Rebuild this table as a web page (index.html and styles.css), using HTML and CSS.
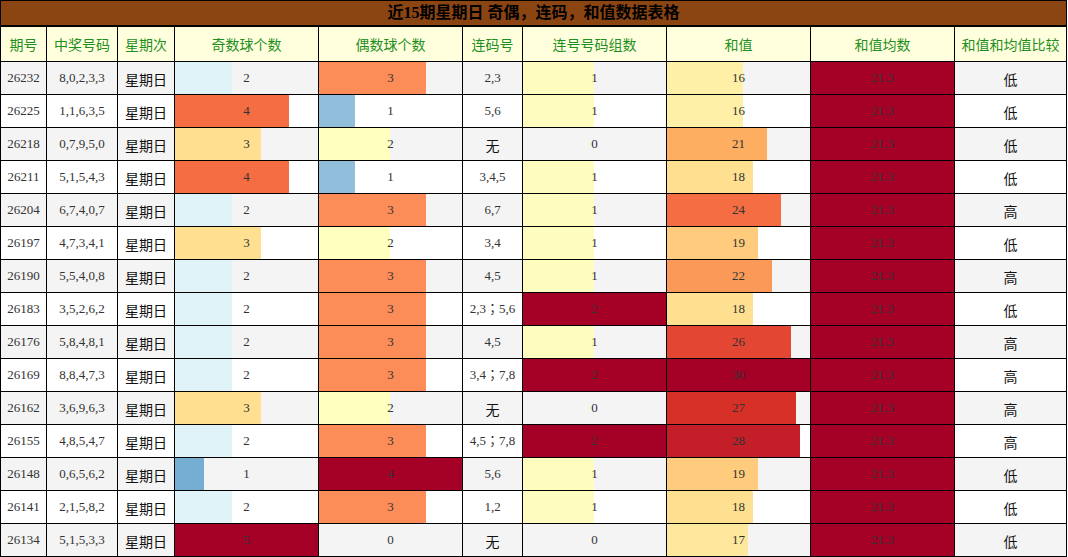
FILE: index.html
```html
<!DOCTYPE html>
<html lang="zh">
<head>
<meta charset="utf-8">
<title>近15期星期日 奇偶，连码，和值数据表格</title>
<link rel="stylesheet" href="styles.css">
</head>
<body>
<table class="data">
  <colgroup>
    <col class="c-qh"><col class="c-hm"><col class="c-xq"><col class="c-bar"><col class="c-bar"><col class="c-lm"><col class="c-bar"><col class="c-bar"><col class="c-bar"><col class="c-cmp">
  </colgroup>
  <thead>
    <tr class="title-row"><th colspan="10">近15期星期日 奇偶，连码，和值数据表格</th></tr>
    <tr class="head-row">
      <th>期号</th><th>中奖号码</th><th>星期次</th><th>奇数球个数</th><th>偶数球个数</th><th>连码号</th><th>连号号码组数</th><th>和值</th><th>和值均数</th><th>和值和均值比较</th>
    </tr>
  </thead>
  <tbody>
    <tr><td class="num">26232</td><td class="num">8,0,2,3,3</td><td class="cjk">星期日</td><td class="bar" style="--w:40%;--c:#e0f3f8">2</td><td class="bar" style="--w:75%;--c:#fc8d59">3</td><td class="num">2,3</td><td class="bar" style="--w:50%;--c:#fffcbf">1</td><td class="bar" style="--w:53.33%;--c:#fff0a8">16</td><td class="bar" style="--w:100%;--c:#a50026">21.3</td><td class="cjk">低</td></tr>
    <tr><td class="num">26225</td><td class="num">1,1,6,3,5</td><td class="cjk">星期日</td><td class="bar" style="--w:80%;--c:#f46d43">4</td><td class="bar" style="--w:25%;--c:#91bfdb">1</td><td class="num">5,6</td><td class="bar" style="--w:50%;--c:#fffcbf">1</td><td class="bar" style="--w:53.33%;--c:#fff0a8">16</td><td class="bar" style="--w:100%;--c:#a50026">21.3</td><td class="cjk">低</td></tr>
    <tr><td class="num">26218</td><td class="num">0,7,9,5,0</td><td class="cjk">星期日</td><td class="bar" style="--w:60%;--c:#fee090">3</td><td class="bar" style="--w:50%;--c:#ffffbf">2</td><td class="cjk">无</td><td class="bar" style="--w:0%;--c:#fffcbf">0</td><td class="bar" style="--w:70%;--c:#fdae61">21</td><td class="bar" style="--w:100%;--c:#a50026">21.3</td><td class="cjk">低</td></tr>
    <tr><td class="num">26211</td><td class="num">5,1,5,4,3</td><td class="cjk">星期日</td><td class="bar" style="--w:80%;--c:#f46d43">4</td><td class="bar" style="--w:25%;--c:#91bfdb">1</td><td class="num">3,4,5</td><td class="bar" style="--w:50%;--c:#fffcbf">1</td><td class="bar" style="--w:60%;--c:#fee090">18</td><td class="bar" style="--w:100%;--c:#a50026">21.3</td><td class="cjk">低</td></tr>
    <tr><td class="num">26204</td><td class="num">6,7,4,0,7</td><td class="cjk">星期日</td><td class="bar" style="--w:40%;--c:#e0f3f8">2</td><td class="bar" style="--w:75%;--c:#fc8d59">3</td><td class="num">6,7</td><td class="bar" style="--w:50%;--c:#fffcbf">1</td><td class="bar" style="--w:80%;--c:#f46d43">24</td><td class="bar" style="--w:100%;--c:#a50026">21.3</td><td class="cjk">高</td></tr>
    <tr><td class="num">26197</td><td class="num">4,7,3,4,1</td><td class="cjk">星期日</td><td class="bar" style="--w:60%;--c:#fee090">3</td><td class="bar" style="--w:50%;--c:#ffffbf">2</td><td class="num">3,4</td><td class="bar" style="--w:50%;--c:#fffcbf">1</td><td class="bar" style="--w:63.33%;--c:#fecc7c">19</td><td class="bar" style="--w:100%;--c:#a50026">21.3</td><td class="cjk">低</td></tr>
    <tr><td class="num">26190</td><td class="num">5,5,4,0,8</td><td class="cjk">星期日</td><td class="bar" style="--w:40%;--c:#e0f3f8">2</td><td class="bar" style="--w:75%;--c:#fc8d59">3</td><td class="num">4,5</td><td class="bar" style="--w:50%;--c:#fffcbf">1</td><td class="bar" style="--w:73.33%;--c:#fb9a58">22</td><td class="bar" style="--w:100%;--c:#a50026">21.3</td><td class="cjk">高</td></tr>
    <tr><td class="num">26183</td><td class="num">3,5,2,6,2</td><td class="cjk">星期日</td><td class="bar" style="--w:40%;--c:#e0f3f8">2</td><td class="bar" style="--w:75%;--c:#fc8d59">3</td><td class="num">2,3；5,6</td><td class="bar" style="--w:100%;--c:#a50026">2</td><td class="bar" style="--w:60%;--c:#fee090">18</td><td class="bar" style="--w:100%;--c:#a50026">21.3</td><td class="cjk">低</td></tr>
    <tr><td class="num">26176</td><td class="num">5,8,4,8,1</td><td class="cjk">星期日</td><td class="bar" style="--w:40%;--c:#e0f3f8">2</td><td class="bar" style="--w:75%;--c:#fc8d59">3</td><td class="num">4,5</td><td class="bar" style="--w:50%;--c:#fffcbf">1</td><td class="bar" style="--w:86.67%;--c:#e34632">26</td><td class="bar" style="--w:100%;--c:#a50026">21.3</td><td class="cjk">高</td></tr>
    <tr><td class="num">26169</td><td class="num">8,8,4,7,3</td><td class="cjk">星期日</td><td class="bar" style="--w:40%;--c:#e0f3f8">2</td><td class="bar" style="--w:75%;--c:#fc8d59">3</td><td class="num">3,4；7,8</td><td class="bar" style="--w:100%;--c:#a50026">2</td><td class="bar" style="--w:100%;--c:#a50026">30</td><td class="bar" style="--w:100%;--c:#a50026">21.3</td><td class="cjk">高</td></tr>
    <tr><td class="num">26162</td><td class="num">3,6,9,6,3</td><td class="cjk">星期日</td><td class="bar" style="--w:60%;--c:#fee090">3</td><td class="bar" style="--w:50%;--c:#ffffbf">2</td><td class="cjk">无</td><td class="bar" style="--w:0%;--c:#fffcbf">0</td><td class="bar" style="--w:90%;--c:#d73027">27</td><td class="bar" style="--w:100%;--c:#a50026">21.3</td><td class="cjk">高</td></tr>
    <tr><td class="num">26155</td><td class="num">4,8,5,4,7</td><td class="cjk">星期日</td><td class="bar" style="--w:40%;--c:#e0f3f8">2</td><td class="bar" style="--w:75%;--c:#fc8d59">3</td><td class="num">4,5；7,8</td><td class="bar" style="--w:100%;--c:#a50026">2</td><td class="bar" style="--w:93.33%;--c:#c41f29">28</td><td class="bar" style="--w:100%;--c:#a50026">21.3</td><td class="cjk">高</td></tr>
    <tr><td class="num">26148</td><td class="num">0,6,5,6,2</td><td class="cjk">星期日</td><td class="bar" style="--w:20%;--c:#76aed3">1</td><td class="bar" style="--w:100%;--c:#a50026">4</td><td class="num">5,6</td><td class="bar" style="--w:50%;--c:#fffcbf">1</td><td class="bar" style="--w:63.33%;--c:#fecc7c">19</td><td class="bar" style="--w:100%;--c:#a50026">21.3</td><td class="cjk">低</td></tr>
    <tr><td class="num">26141</td><td class="num">2,1,5,8,2</td><td class="cjk">星期日</td><td class="bar" style="--w:40%;--c:#e0f3f8">2</td><td class="bar" style="--w:75%;--c:#fc8d59">3</td><td class="num">1,2</td><td class="bar" style="--w:50%;--c:#fffcbf">1</td><td class="bar" style="--w:60%;--c:#fee090">18</td><td class="bar" style="--w:100%;--c:#a50026">21.3</td><td class="cjk">低</td></tr>
    <tr><td class="num">26134</td><td class="num">5,1,5,3,3</td><td class="cjk">星期日</td><td class="bar" style="--w:100%;--c:#a50026">5</td><td class="bar" style="--w:0%;--c:#91bfdb">0</td><td class="cjk">无</td><td class="bar" style="--w:0%;--c:#fffcbf">0</td><td class="bar" style="--w:56.67%;--c:#fee89e">17</td><td class="bar" style="--w:100%;--c:#a50026">21.3</td><td class="cjk">低</td></tr>
  </tbody>
</table>
</body>
</html>
```

FILE: styles.css
```css
html, body {
  margin: 0;
  padding: 0;
  background: #ffffff;
}

body {
  font-family: "Liberation Serif", "Noto Sans CJK SC", serif;
}

.data {
  border-collapse: collapse;
  table-layout: fixed;
  width: 1067px;
  border: 1px solid #000;
}

.c-qh { width: 46px; }
.c-hm { width: 71px; }
.c-xq { width: 57px; }
.c-bar { width: 144px; }
.c-lm { width: 60px; }
.c-cmp { width: 112px; }

.data th,
.data td {
  border: 1px solid #000;
  padding: 0;
  text-align: center;
  vertical-align: middle;
  white-space: nowrap;
  overflow: hidden;
}

.title-row th {
  background: #8b4513;
  color: #000;
  font-family: "Liberation Serif", "Noto Sans CJK SC", serif;
  font-weight: bold;
  font-size: 16px;
  height: 24px;
  line-height: 24px;
  border-bottom: 2px solid #000;
}

.head-row th {
  background: #ffffdd;
  color: #1f8f1f;
  font-family: "Noto Sans CJK SC", sans-serif;
  font-weight: normal;
  font-size: 14px;
  height: 34px;
}

.data td {
  height: 32px;
  line-height: 16px;
  font-size: 13px;
  color: #333;
  background-color: #ffffff;
}

.data td.num {
  font-family: "Liberation Serif", "Noto Sans CJK TC", serif;
}

.data tbody tr:nth-child(odd) td {
  background-color: #f4f4f4;
}

.data td.cjk {
  font-family: "Noto Sans CJK SC", sans-serif;
  font-size: 14px;
  color: #111;
  height: 30px;
  padding-top: 2px;
}

.data td.bar {
  background-image: linear-gradient(to right, var(--c) 0, var(--c) var(--w), transparent var(--w));
  background-repeat: no-repeat;
}
```
